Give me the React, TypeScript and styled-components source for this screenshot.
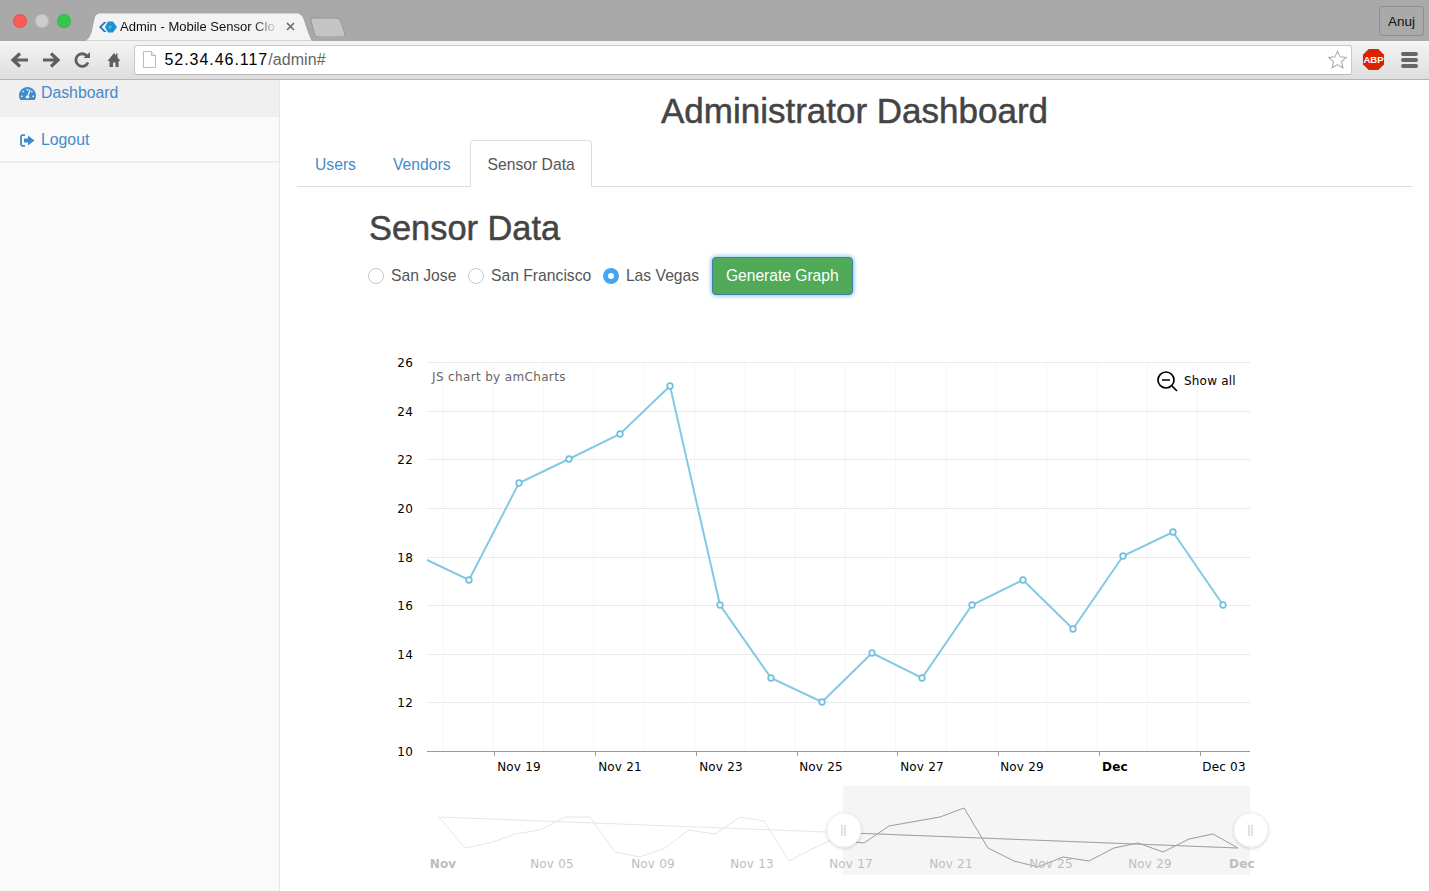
import React from "react";
import styled, { createGlobalStyle } from "styled-components";
import { FaTachometerAlt } from "react-icons/fa";

const Global = createGlobalStyle`
  html, body { margin: 0; padding: 0; height: 100%; overflow: hidden; background: #fff; }
  body { font-family: "Liberation Sans", Arial, sans-serif; color: #333; }
  #root { height: 100%; }
`;

const Page = styled.div`
  width: 1429px; height: 891px; display: flex; flex-direction: column; overflow: hidden;
`;
const TitleBar = styled.div`
  height: 41px; flex: none; background: #a9a9a9; display: flex; position: relative;
  padding-left: 13px; box-sizing: border-box;
`;
const Lights = styled.div`display: flex; gap: 8px; padding-top: 14px; width: 72px; flex: none;`;
const Light = styled.span<{ $c: string }>`
  width: 14px; height: 14px; border-radius: 50%; background: ${p => p.$c}; box-shadow: inset 0 0 0 1px rgba(0,0,0,.08);
`;
const Tab = styled.div`
  margin-top: 13px; margin-left: 14px; width: 198px; height: 28px; flex: none; box-sizing: border-box; position: relative;
  display: flex; align-items: center; padding: 0 5px 1px 0; font-size: 13px; color: #111; white-space: nowrap;
`;
const TabShape = styled.svg`position: absolute; left: -17px; top: 0; width: 232px; height: 28px;`;
const TabTitle = styled.span`
  position: relative; margin-left: 3px; width: 158px; flex: none;
  -webkit-mask-image: linear-gradient(90deg, #000 84%, transparent 100%);
  mask-image: linear-gradient(90deg, #000 84%, transparent 100%);
`;
const TabClose = styled.svg`position: relative; margin-left: 8px; width: 9px; height: 9px; flex: none;`;
const Favicon = styled.svg`position: relative; width: 18px; height: 12px; flex: none;`;
const NewTab = styled.svg`margin: 17px 0 0 13px; width: 36px; height: 20px; flex: none;`;
const UserChip = styled.div`
  margin: 6px 5px 0 auto; width: 45px; height: 30px; box-sizing: border-box;
  border: 1px solid #8f8f8f; border-radius: 3px; font-size: 13.5px; color: #111;
  display: flex; align-items: center; justify-content: center;
`;
const Toolbar = styled.div`
  height: 39px; flex: none; box-sizing: border-box; display: flex; align-items: center;
  background: linear-gradient(180deg, #f4f4f4 0%, #dedede 100%); border-bottom: 1px solid #b5b5b5;
  padding: 0 0 1px 10px;
`;
const NavIcon = styled.svg`width: 20px; height: 20px; flex: none; margin-right: 10.5px;`;
const Omni = styled.div`
  flex: none; width: 1218px; height: 30px; box-sizing: border-box; background: #fff; margin-left: 1.5px;
  border: 1px solid #c9c9c9; border-bottom-color: #bbb; border-radius: 3px; display: flex; align-items: center; padding: 1px 0 0 7px;
  font-size: 16px;
`;
const PageGlyph = styled.svg`width: 13px; height: 17px; flex: none; margin: -1px 9px 0 1px;`;
const Host = styled.span`color: #000; letter-spacing: .95px;`;
const Path = styled.span`color: #666; letter-spacing: .1px;`;
const Star = styled.svg`margin: -1px 3px 0 auto; width: 21px; height: 21px;`;
const Abp = styled.svg`margin-left: 10px; width: 23px; height: 23px; flex: none;`;
const Burger = styled.div`
  margin-left: 16px; width: 17px; display: flex; flex-direction: column; gap: 2px; flex: none;
`;
const BurgerBar = styled.span`height: 4px; background: #666; border-radius: 2px;`;

const Body = styled.div`flex: 1; display: flex; min-height: 0;`;
const Sidebar = styled.aside`
  width: 280px; flex: none; box-sizing: border-box; background: #fafafa; border-right: 1px solid #e7e7e7;
`;
const SideItem = styled.a<{ $active?: boolean; $h: number }>`
  display: flex; align-items: center; gap: 5px; height: ${p => p.$h}px; box-sizing: border-box; padding: ${p => p.$active ? "0 0 9px 18px" : "2px 0 0 18px"};
  background: ${p => p.$active ? "#f0f0f0" : "transparent"}; border-bottom: 2px solid #eeeeee;
  color: #428bca; font-size: 15.8px;
`;
const SideIcon = styled.span`width: 18px; height: 16px; flex: none; display: flex; align-items: center; justify-content: center;`;
const Main = styled.main`flex: 1; min-width: 0; padding: 0 17px; box-sizing: border-box;`;
const Title = styled.h1`
  margin: 0; padding-top: 10px; height: 60px; box-sizing: border-box; text-align: center; font-size: 35px; line-height: 41px; font-weight: 500; color: #444;
  -webkit-text-stroke: .5px #444;
`;
const Tabs = styled.div`display: flex; height: 47px; box-sizing: border-box; border-bottom: 1px solid #ddd;`;
const TabLink = styled.a<{ $active?: boolean }>`
  height: 47px; box-sizing: border-box; padding: 2px ${p => p.$active ? 16 : 17}px 0 17px; margin-right: 1px; display: flex; align-items: center;
  font-size: 15.7px; color: ${p => p.$active ? "#555" : "#428bca"};
  ${p => p.$active ? "background:#fff;border:1px solid #ddd;border-bottom-color:#fff;border-radius:4px 4px 0 0;" : "border:1px solid transparent;"}
`;
const Section = styled.section`padding-left: 72px;`;
const Heading = styled.h2`
  margin: 0; padding-top: 21px; height: 66px; box-sizing: border-box; font-size: 34.4px; line-height: 41px; font-weight: 500; color: #444;
  -webkit-text-stroke: .5px #444;
`;
const Controls = styled.div`display: flex; align-items: center; height: 46px; margin-left: -1px;`;
const Radio = styled.span<{ $on?: boolean }>`
  width: 16px; height: 16px; box-sizing: border-box; border-radius: 50%; flex: none; margin-right: 7px;
  border: ${p => p.$on ? "5.5px solid #45a5f5" : "1px solid #c6c6c6"}; background: #fff;
`;
const RadioLabel = styled.span`font-size: 15.7px; color: #555; margin-right: 11.6px;`;
const Generate = styled.button`
  margin-left: 1px; width: 141px; height: 38px; box-sizing: border-box; background: #50aa57; color: #fff; font: 15.6px "Liberation Sans", Arial, sans-serif;
  border: 1px solid #3f7fa6; border-radius: 4px; box-shadow: 0 0 4px 1px #8cc4f5; padding: 0;
`;
const ChartSvg = styled.svg`display: block; margin: 35px 0 0 19px; width: 900px; height: 553px; overflow: visible;`;
const AxisText = styled.text<{ $muted?: boolean; $bold?: boolean }>`
  font-family: "DejaVu Sans", Verdana, sans-serif; font-size: 12px; letter-spacing: .2px; fill: ${p => p.$muted ? "#bdbdbd" : "#000"};
  font-weight: ${p => p.$bold ? 700 : 400};
`;
const Credit = styled.text`font-family: "DejaVu Sans", Verdana, sans-serif; font-size: 12px; letter-spacing: .35px; fill: #666;`;

const OX = 388, OY = 334;
const X = (v: number) => v - OX;
const Y = (v: number) => v - OY;
const pts = (a: number[][]) => a.map(([x, y]) => `${X(x)},${Y(y)}`).join(" ");

const main = [[427,560],[469,580],[519,483],[569,459],[620,434],[670,386],[720,605],[771,678],[822,702],[872,653],[922,678],[972,605],[1023,580],[1073,629],[1123,556],[1173,532],[1223,605]];
const mini = [[439,817],[465,848],[490,843],[515,834],[540,830],[565,817],[590,817],[615,852],[640,857],[665,848],[689,830],[715,834],[740,817],[764,821],[789,861],[814,848],[840,836],[855,842],[864,843],[889,826],[940,817],[964,808],[988,848],[1014,861],[1038,867],[1063,857],[1089,861],[1114,848],[1138,843],[1163,852],[1189,839],[1213,834],[1238,848],[439,817]];
const hLines = [[26,362],[24,411],[22,459],[20,508],[18,557],[16,605],[14,654],[12,702],[10,751]];
const vLines = Array.from({ length: 16 }, (_, i) => 443 + i * 50.3);
const ticks = [494, 595, 696, 797, 897, 998, 1099, 1200];
const xLabels: [string, number, boolean?][] = [["Nov 19",519],["Nov 21",620],["Nov 23",721],["Nov 25",821],["Nov 27",922],["Nov 29",1022],["Dec",1115,true],["Dec 03",1224]];
const miniLabels: [string, number, boolean?][] = [["Nov",443,true],["Nov 05",552],["Nov 09",653],["Nov 13",752],["Nov 17",851],["Nov 21",951],["Nov 25",1051],["Nov 29",1150],["Dec",1242,true]];

const Handle = ({ x }: { x: number }) => (
  <g>
    <circle cx={X(x)} cy={Y(830)} r={17} fill="#fff" stroke="#eee" strokeWidth={1} filter="url(#hs)" />
    <path d={`M${X(x)-2} ${Y(825)}V${Y(836)}M${X(x)+1} ${Y(825)}V${Y(836)}`} stroke="#c4c4c4" strokeWidth={1} />
  </g>
);

export default function App() {
  return (
    <Page>
      <Global />
      <TitleBar>
        <Lights>
          <Light $c="#fc5b57" />
          <Light $c="#cdcdcd" />
          <Light $c="#34c84a" />
        </Lights>
        <Tab>
          <TabShape viewBox="0 0 232 28">
            <path d="M0 28C5 28 7 25 9 20L12 6C13 2 15 0 19 0H214C218 0 220 2 222 6L227 21C229 25 229 28 232 28Z" fill="#f3f3f3" stroke="#8e8e8e" strokeWidth=".6" />
          </TabShape>
          <Favicon viewBox="0 0 18 12">
            <path d="M0 6L5 1H7.5L2.5 6L7.5 11H5Z" fill="#1c79b8" />
            <path d="M9 .5H14L18 6L14 11.5H9L6 6Z" fill="#1c92d2" />
            <circle cx="11" cy="6" r="1.5" fill="#5cb8e6" />
          </Favicon>
          <TabTitle>Admin - Mobile Sensor Clo</TabTitle>
          <TabClose viewBox="0 0 9 9"><path d="M1 1L8 8M8 1L1 8" stroke="#666" strokeWidth="1.5" /></TabClose>
        </Tab>
        <NewTab viewBox="0 0 36 20">
          <path d="M1 1H26C29 1 30 3 31 5L35 17C35 19 34 20 32 20H8C6 20 5 18 4 16L1 3Z" fill="#c4c4c4" stroke="#8d8d8d" strokeWidth=".8" />
        </NewTab>
        <UserChip>Anuj</UserChip>
      </TitleBar>
      <Toolbar>
        <NavIcon viewBox="0 0 20 20"><path d="M18 10H4M10 3.5L3 10L10 16.5" fill="none" stroke="#5f5f5f" strokeWidth="3.2" /></NavIcon>
        <NavIcon viewBox="0 0 20 20"><path d="M2 10H16M10 3.5L17 10L10 16.5" fill="none" stroke="#5f5f5f" strokeWidth="3.2" /></NavIcon>
        <NavIcon viewBox="0 0 20 20"><path d="M17 12.5A6.3 6.3 0 1 1 16 6" fill="none" stroke="#5f5f5f" strokeWidth="2.8" /><path d="M12.5 8H19V2Z" fill="#5f5f5f" /></NavIcon>
        <NavIcon viewBox="0 0 20 20"><path d="M7.5 17V11H5.5L12 3L14 5.5V3.5H15.5V7.5L18.5 11H16.5V17H13.5V12.5H11V17Z" fill="#5f5f5f" /></NavIcon>
        <Omni>
          <PageGlyph viewBox="0 0 13 17"><path d="M.5.5H8.5L12.5 4.5V16.5H.5Z" fill="#fff" stroke="#bbb" /><path d="M8.5.5V4.5H12.5" fill="#eee" stroke="#bbb" /></PageGlyph>
          <Host>52.34.46.117</Host><Path>/admin#</Path>
          <Star viewBox="0 0 24 24"><path d="M12 2.5L14.9 9L22 9.7L16.6 14.4L18.2 21.5L12 17.8L5.8 21.5L7.4 14.4L2 9.7L9.1 9Z" fill="#fff" stroke="#aaa" strokeWidth="1.2" /></Star>
        </Omni>
        <Abp viewBox="0 0 24 24">
          <path d="M7 1H17L23 7V17L17 23H7L1 17V7Z" fill="#dd2200" />
          <text x="12" y="15.5" textAnchor="middle" fontFamily="Liberation Sans" fontSize="10" fontWeight="700" fill="#fff">ABP</text>
        </Abp>
        <Burger><BurgerBar /><BurgerBar /><BurgerBar /></Burger>
      </Toolbar>
      <Body>
        <Sidebar>
          <SideItem $active $h={37}>
            <SideIcon><FaTachometerAlt size={17} /></SideIcon>Dashboard
          </SideItem>
          <SideItem $h={46}>
            <SideIcon>
              <svg width="15" height="13" viewBox="0 0 15 13"><path d="M5 1.2H2.5C1.6 1.2 1 1.8 1 2.7V10.3C1 11.2 1.6 11.8 2.5 11.8H5" fill="none" stroke="#428bca" strokeWidth="1.8" /><path d="M4 4.5H8V1.5L14.5 6.5L8 11.5V8.5H4Z" fill="#428bca" /></svg>
            </SideIcon>Logout
          </SideItem>
        </Sidebar>
        <Main>
          <Title>Administrator Dashboard</Title>
          <Tabs>
            <TabLink>Users</TabLink>
            <TabLink>Vendors</TabLink>
            <TabLink $active>Sensor Data</TabLink>
          </Tabs>
          <Section>
            <Heading>Sensor Data</Heading>
            <Controls>
              <Radio /><RadioLabel>San Jose</RadioLabel>
              <Radio /><RadioLabel>San Francisco</RadioLabel>
              <Radio $on /><RadioLabel>Las Vegas</RadioLabel>
              <Generate>Generate Graph</Generate>
            </Controls>
            <ChartSvg viewBox="0 0 900 553">
              <defs>
                <clipPath id="sel"><rect x={X(843)} y={Y(786)} width={407} height={89} /></clipPath>
                <filter id="hs" x="-30%" y="-30%" width="160%" height="160%"><feDropShadow dx="0" dy="1" stdDeviation="1.5" floodColor="#000" floodOpacity=".18" /></filter>
              </defs>
              {vLines.map(x => <line key={x} x1={X(x)} x2={X(x)} y1={Y(362)} y2={Y(751)} stroke="#eee" strokeWidth={1} strokeDasharray="1 1" />)}
              {hLines.map(([v, y]) => (
                <g key={v}>
                  <line x1={X(427)} x2={X(1250)} y1={Y(y) + .5} y2={Y(y) + .5} stroke={v === 10 ? "#999" : "#e9e9e9"} />
                  <AxisText x={X(413)} y={Y(y) + 5} textAnchor="end">{v}</AxisText>
                </g>
              ))}
              {ticks.map(x => <line key={x} x1={X(x) + .5} x2={X(x) + .5} y1={Y(751)} y2={Y(756)} stroke="#999" />)}
              {xLabels.map(([t, x, b]) => <AxisText key={t} x={X(x)} y={Y(771)} textAnchor="middle" $bold={b}>{t}</AxisText>)}
              <Credit x={X(432)} y={Y(381)}>JS chart by amCharts</Credit>
              <circle cx={X(1166)} cy={Y(380)} r={8} fill="none" stroke="#000" strokeWidth={1.7} />
              <path d={`M${X(1162)} ${Y(380)}H${X(1170)}M${X(1172)} ${Y(386)}L${X(1177)} ${Y(391)}`} stroke="#000" strokeWidth={1.7} />
              <AxisText x={X(1184)} y={Y(385)}>Show all</AxisText>
              <polyline points={pts(main)} fill="none" stroke="#84c9e4" strokeWidth={2} />
              {main.slice(1).map(([x, y]) => <circle key={x} cx={X(x)} cy={Y(y)} r={2.8} fill="#fff" stroke="#6fbfdd" strokeWidth={1.7} />)}

              <rect x={X(843)} y={Y(786)} width={407} height={89} fill="#f5f5f5" />
              <polyline points={pts(mini)} fill="none" stroke="#e6e6e6" strokeWidth={1} />
              <polyline points={pts(mini)} fill="none" stroke="#a0a0a0" strokeWidth={1} clipPath="url(#sel)" />
              {miniLabels.map(([t, x, b]) => <AxisText key={t} x={X(x)} y={Y(868)} textAnchor="middle" $muted $bold={b}>{t}</AxisText>)}
              <Handle x={844} />
              <Handle x={1251} />
            </ChartSvg>
          </Section>
        </Main>
      </Body>
    </Page>
  );
}
